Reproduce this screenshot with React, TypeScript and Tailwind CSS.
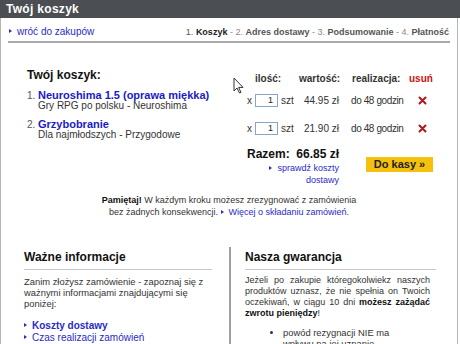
import React from "react";

const Tri = ({ className = "" }: { className?: string }) => (
  <span
    className={
      "inline-block w-0 h-0 border-y-[2.5px] border-y-transparent border-l-[3px] border-l-[#2a2ac8] mr-[5px] align-middle relative -top-[1px] " +
      className
    }
  />
);

const XIcon = () => (
  <svg width="9" height="9" viewBox="0 0 9 9" className="block">
    <path d="M1.5 1.5 L7.5 7.5 M7.5 1.5 L1.5 7.5" stroke="#b01818" strokeWidth="2" strokeLinecap="round" />
  </svg>
);

const Qty = () => (
  <div className="w-[23px] h-[13px] border border-[#8aa4c8] bg-white text-right pr-[4px] text-[9px] leading-[11px] text-[#222]">
    1
  </div>
);

const Row = ({ price }: { price: string }) => (
  <div className="flex items-center h-[14px] text-[10px] text-[#333]">
    <span className="w-[8px]">x</span>
    <Qty />
    <span className="ml-[3px] w-[11px]">szt</span>
    <span className="w-[47px] text-right">{price}</span>
    <span className="ml-[12px] w-[67px] tracking-[-0.4px]">do 48 godzin</span>
    <XIcon />
  </div>
);

export default function App() {
  return (
    <div className="relative w-[460px] h-[344px] overflow-hidden bg-white font-['Liberation_Sans',Arial,sans-serif] text-[#222]">
      <div className="h-[18px] bg-[#4b4e53] text-white font-bold text-[12px] leading-[18px] pl-[6px] tracking-[0.3px]">
        Twój koszyk
      </div>
      <div className="w-[458px] h-[326px] border-l border-r border-[#b4b4b4]">
        <div className="mx-[7px] pt-[8px] pb-[3px] flex justify-between items-end leading-[12px] border-b-2 border-[#a9a9a9]">
          <a className="text-[#2a2ac8] pl-[1px] text-[10px]">
            <Tri />
            wróć do zakupów
          </a>
          <div className="text-[#222] text-[9px] pr-[1px]">
            <span className="text-[#555]">1. </span>
            <b>Koszyk</b>
            <span className="text-[#888]"> - 2. </span>
            <b className="text-[#555]">Adres dostawy</b>
            <span className="text-[#888]"> - 3. </span>
            <b className="text-[#555]">Podsumowanie</b>
            <span className="text-[#888]"> - 4. </span>
            <b className="text-[#555]">Płatność</b>
          </div>
        </div>

        <div className="flex">
          <div className="pl-[26px] pt-[25px] w-[246px]">
            <div className="font-bold text-[12px] leading-[14px] text-[#111]">Twój koszyk:</div>
            <div className="mt-[8px] flex">
              <span className="w-[11px] text-[10px] leading-[11px] text-[#555]">1.</span>
              <div>
                <div className="font-bold text-[11px] leading-[11px] text-[#1a1ac8]">Neuroshima 1.5 (oprawa miękka)</div>
                <div className="text-[10px] leading-[10px] text-[#333]">Gry RPG po polsku - Neuroshima</div>
              </div>
            </div>
            <div className="mt-[8px] flex">
              <span className="w-[11px] text-[10px] leading-[11px] text-[#555]">2.</span>
              <div>
                <div className="font-bold text-[11px] leading-[11px] text-[#1a1ac8]">Grzybobranie</div>
                <div className="text-[10px] leading-[10px] text-[#333]">Dla najmłodszych - Przygodowe</div>
              </div>
            </div>
          </div>

          <div className="pt-[30px]">
            <div className="flex text-[10px] leading-[12px] font-bold text-[#333] pl-[8px]">
              <span className="w-[44px]">ilość:</span>
              <span className="w-[53px]">wartość:</span>
              <span className="w-[57px]">realizacja:</span>
              <span className="text-[#d01010]">usuń</span>
            </div>
            <div className="mt-[8px]">
              <Row price="44.95 zł" />
            </div>
            <div className="mt-[14px]">
              <Row price="21.90 zł" />
            </div>
            <div className="mt-[12px] flex">
              <div className="w-[92px]">
                <div className="flex justify-between font-bold text-[12px] leading-[14px] text-[#111]">
                  <span>Razem:</span>
                  <span>66.85 zł</span>
                </div>
                <div className="mt-[1px] text-right text-[9px] leading-[12px] text-[#2a2ac8]">
                  <Tri />
                  sprawdź koszty
                  <br />
                  dostawy
                </div>
              </div>
              <div className="ml-[27px] mt-[10px] w-[67px] h-[15px] bg-[#f6c10e] text-[11px] leading-[15px] text-center text-[#222] font-bold">
                Do kasy »
              </div>
            </div>
          </div>
        </div>

        <div className="mt-[8px] text-center text-[9px] leading-[12px] text-[#333]">
          <b className="text-[#111]">Pamiętaj!</b> W każdym kroku możesz zrezygnować z zamówienia
          <br />
          bez żadnych konsekwencji. <Tri className="mr-[2px]" />
          <span className="text-[#2a2ac8]">Więcej o składaniu zamówień.</span>
        </div>

        <div className="mt-[29px] flex">
          <div className="w-[230px] pl-[23px] pr-[17px] pt-[3px] border-r-2 border-[#a0a0a0] h-[100px]">
            <div className="font-bold text-[12px] leading-[14px] pb-[5px] border-b border-[#c8c8c8] text-[#111]">Ważne informacje</div>
            <div className="mt-[6px] text-[9.4px] leading-[11px] text-[#333]">
              Zanim złożysz zamówienie - zapoznaj się z ważnymi informacjami znajdującymi się poniżej:
            </div>
            <div className="mt-[11px] text-[10px] leading-[12px] text-[#2a2ac8]">
              <div className="font-bold"><Tri />Koszty dostawy</div>
              <div><Tri />Czas realizacji zamówień</div>
            </div>
          </div>
          <div className="flex-1 pl-[14px] pr-[21px] pt-[3px]">
            <div className="font-bold text-[12px] leading-[14px] pb-[5px] border-b border-[#c8c8c8] text-[#111]">Nasza gwarancja</div>
            <div className="mt-[5px] mr-[6px] text-[9px] leading-[11px] text-[#333] text-justify">
              Jeżeli po zakupie któregokolwiekz naszych produktów uznasz, że nie spełnia on Twoich oczekiwań, w ciągu 10 dni <b className="text-[#111]">możesz zażądać zwrotu pieniędzy</b>!
            </div>
            <ul className="mt-[8px] w-[150px] pl-[38px] text-[9.4px] leading-[11px] text-[#333] list-disc">
              <li>powód rezygnacji NIE ma wpływu na jej uznanie</li>
            </ul>
          </div>
        </div>
      </div>

      <svg className="absolute left-[233px] top-[77px]" width="12" height="18" viewBox="0 0 12 18">
        <path d="M1 1 L1 14 L4 11 L6.5 16 L8 15.3 L5.6 10.4 L10 10.4 Z" fill="white" stroke="#333" strokeWidth="1" />
      </svg>
    </div>
  );
}
